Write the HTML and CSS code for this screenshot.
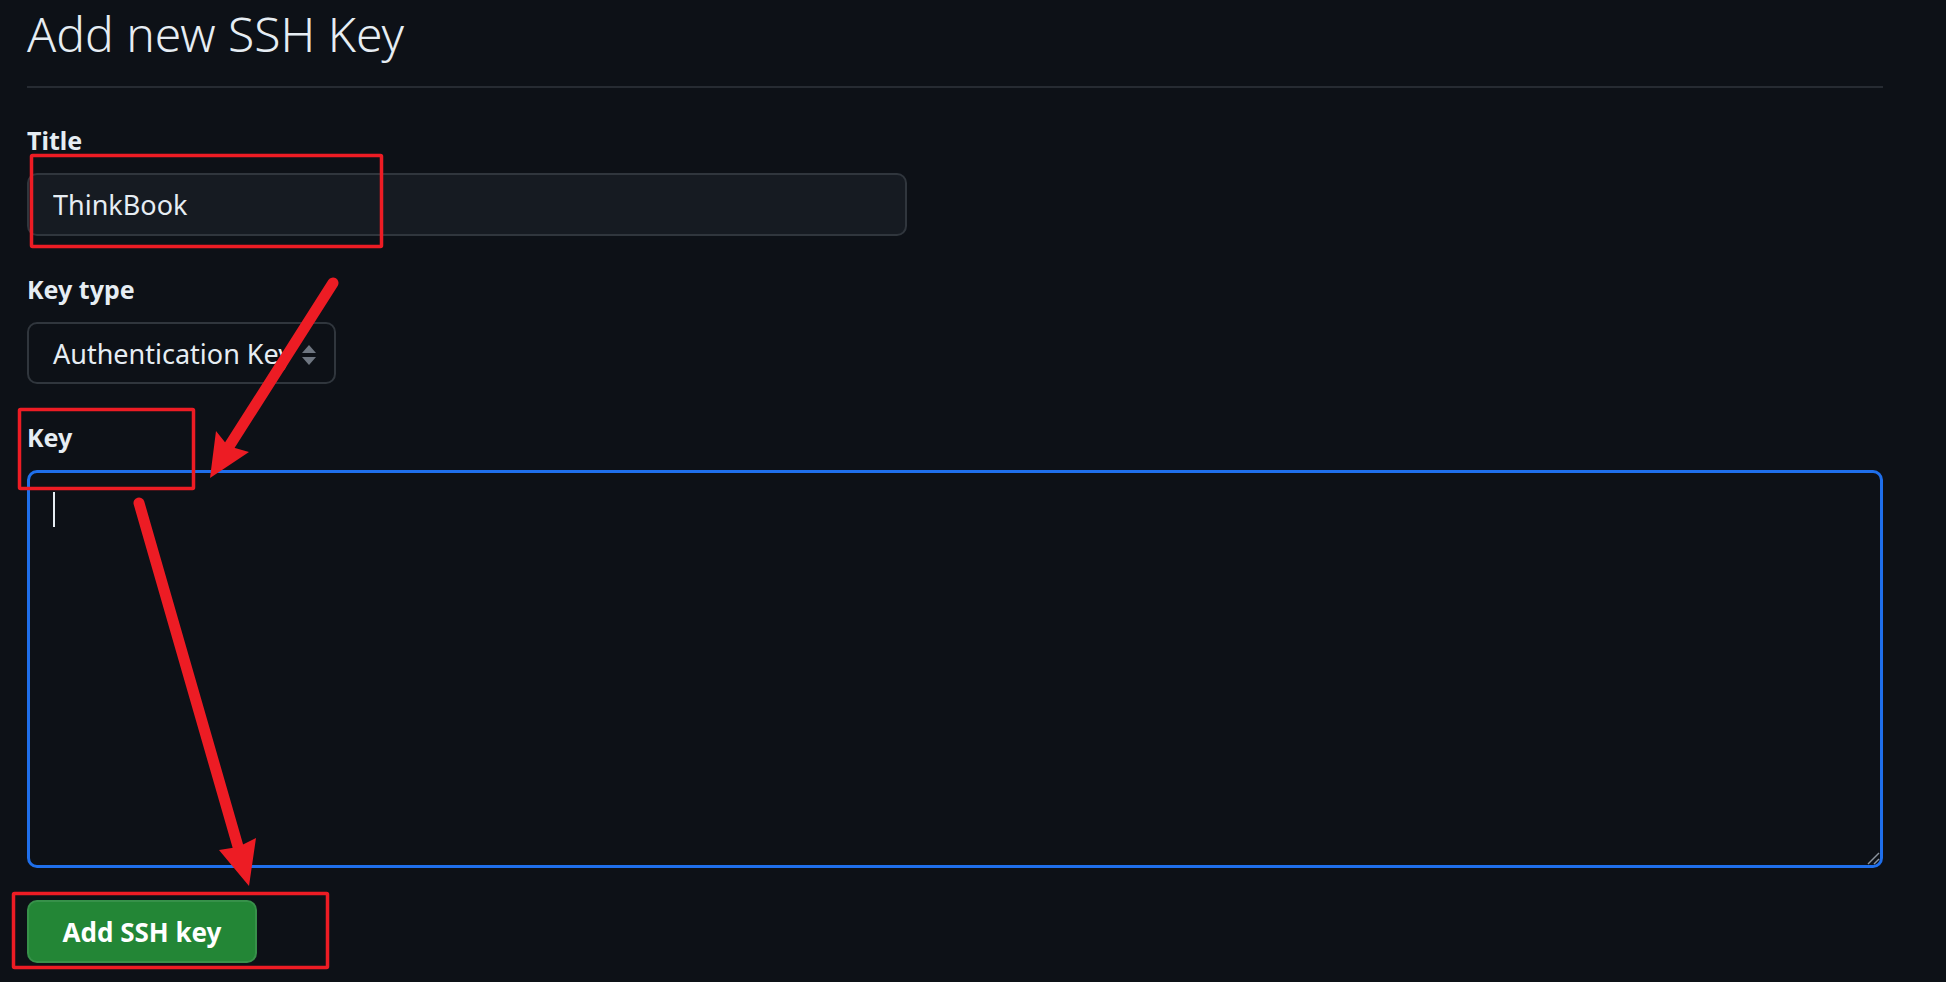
FILE: index.html
```html
<!DOCTYPE html>
<html lang="en">
<head>
<meta charset="utf-8">
<title>Add new SSH Key</title>
<link rel="stylesheet" href="styles.css">
</head>
<body>
<main class="page">
  <div class="subhead">
    <h2 class="subhead-heading">Add new SSH Key</h2>
  </div>
  <form class="ssh-form">
    <label class="form-label label-title">Title</label>
    <input class="form-control title-input" type="text" value="ThinkBook">
    <label class="form-label label-gap">Key type</label>
    <div class="form-select">
      <span class="select-text">Authentication Key</span>
      <svg class="select-arrows" width="16" height="22" viewBox="0 0 16 22">
        <path d="M8 1 L15 9 L1 9 Z" fill="#6e7681"/>
        <path d="M1 13 L15 13 L8 21 Z" fill="#6e7681"/>
      </svg>
    </div>
    <label class="form-label label-gap">Key</label>
    <div class="key-area">
      <span class="caret"></span>
      <svg class="resize-grip" width="14" height="14" viewBox="0 0 14 14">
        <path d="M2 13 L13 2" stroke="#8b949e" stroke-width="1.5"/>
        <path d="M8 13 L13 8" stroke="#8b949e" stroke-width="1.5"/>
      </svg>
    </div>
    <button class="btn-primary" type="button">Add SSH key</button>
  </form>

  <svg class="annotations" width="1946" height="982" viewBox="0 0 1946 982">
    <g fill="none" stroke="#ed1c24" stroke-width="3.5">
      <rect x="31.5" y="155.5" width="350" height="91" rx="1"/>
      <rect x="19.5" y="409.5" width="174" height="79" rx="1"/>
      <rect x="13.5" y="893.5" width="314" height="74" rx="1"/>
    </g>
    <g stroke="#ed1c24" stroke-width="11" stroke-linecap="round">
      <line x1="333" y1="283" x2="228" y2="448"/>
      <line x1="139" y1="503" x2="239" y2="850"/>
    </g>
    <g fill="#ed1c24">
      <polygon points="210,478 216,431 228,446 249,452"/>
      <polygon points="249,886 219,850 238,847 256,838"/>
    </g>
  </svg>
</main>
</body>
</html>
```

FILE: styles.css
```css
html, body {
  margin: 0;
  padding: 0;
  background: #0d1117;
}

body {
  font-family: "Noto Sans", "Open Sans", sans-serif;
  color: #e6edf3;
  width: 1946px;
  height: 982px;
  overflow: hidden;
}

.page {
  position: relative;
  width: 1946px;
  height: 982px;
  padding: 0 63px 0 27px;
  box-sizing: border-box;
}

.subhead {
  padding-top: 4px;
  padding-bottom: 22px;
  border-bottom: 2px solid #262b32;
}

.subhead-heading {
  margin: 0;
  font-size: 48px;
  line-height: 60px;
  font-weight: 300;
  color: #e6edf3;
}

.ssh-form {
  display: flex;
  flex-direction: column;
  align-items: flex-start;
}

.form-label {
  display: block;
  font-size: 25px;
  line-height: 30px;
  font-weight: 700;
  color: #e6edf3;
  margin-bottom: 18px;
}

.label-title {
  margin-top: 37px;
}

.label-gap {
  margin-top: 38px;
}

.form-control {
  box-sizing: border-box;
  width: 880px;
  height: 63px;
  padding: 0 24px;
  border: 2px solid #30363d;
  border-radius: 10px;
  background: #161b22;
  color: #e6edf3;
  font-family: "Noto Sans", "Open Sans", sans-serif;
  font-size: 27px;
  outline: none;
}

.form-select {
  position: relative;
  box-sizing: border-box;
  width: 309px;
  height: 62px;
  padding: 0 24px;
  border: 2px solid #30363d;
  border-radius: 10px;
  background: #0d1117;
  display: flex;
  align-items: center;
  overflow: hidden;
}

.select-text {
  font-size: 27px;
  white-space: nowrap;
  color: #e6edf3;
}

.select-arrows {
  position: absolute;
  right: 17px;
  top: 20px;
}

.key-area {
  position: relative;
  box-sizing: border-box;
  width: 1856px;
  height: 398px;
  margin-top: 0;
  border: 3px solid #1f6feb;
  border-radius: 10px;
  background: #0d1117;
  padding: 19px 23px;
}

.caret {
  display: block;
  width: 2px;
  height: 35px;
  background: #e6edf3;
}

.resize-grip {
  position: absolute;
  right: 0;
  bottom: 0;
}

.btn-primary {
  box-sizing: border-box;
  margin-top: 32px;
  width: 230px;
  height: 63px;
  border: 2px solid rgba(240, 246, 252, 0.1);
  border-radius: 10px;
  background: #238636;
  color: #ffffff;
  font-family: "Noto Sans", "Open Sans", sans-serif;
  font-size: 26px;
  font-weight: 700;
  padding: 0;
}

.annotations {
  position: absolute;
  left: 0;
  top: 0;
  pointer-events: none;
}
```
